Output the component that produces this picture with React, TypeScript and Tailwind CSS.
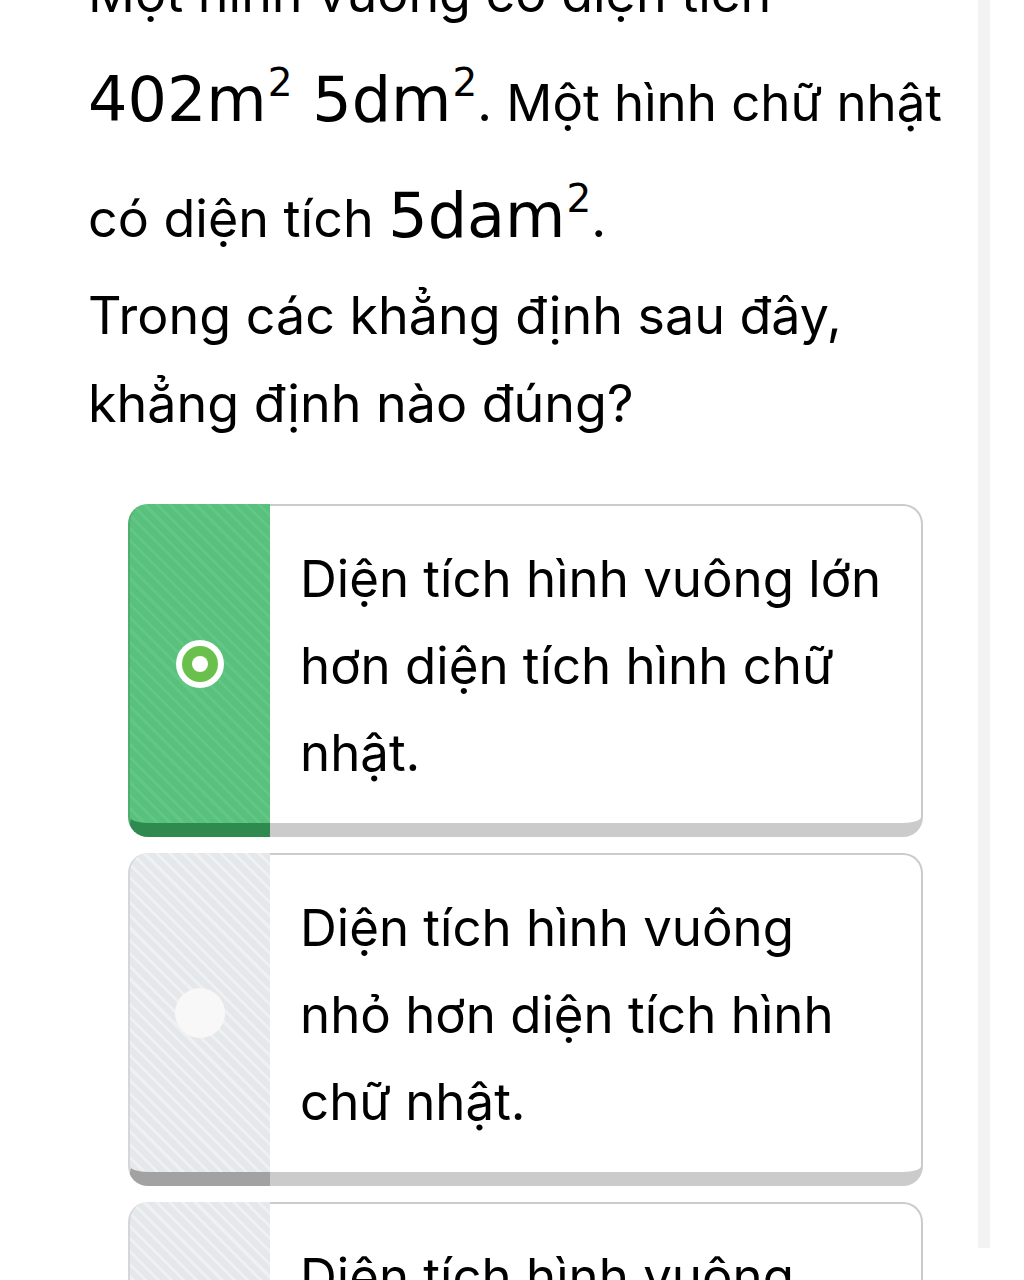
import React from "react";

const body = { fontFamily: "Inter, 'Noto Sans', sans-serif" };
const math = { fontFamily: "'DejaVu Sans', 'Liberation Sans', sans-serif" };

function Sup({ children }: { children: React.ReactNode }) {
  return (
    <span className="relative -top-[25px] ml-[1px] text-[39px] leading-none">{children}</span>
  );
}

function Option({
  lines,
  selected,
}: {
  lines: string[];
  selected?: boolean;
}) {
  return (
    <div className="flex">
      <div
        className={
          selected
            ? "flex w-[142px] shrink-0 items-center justify-center rounded-l-[20px] border-b-[14px] border-l-2 border-[#2f8a50] border-l-[#4eae6e] bg-[#58c27d] bg-[repeating-linear-gradient(45deg,rgba(255,255,255,0.07)_0px,rgba(255,255,255,0.07)_3px,transparent_3px,transparent_9px)]"
            : "flex w-[142px] shrink-0 items-center justify-center rounded-l-[20px] border-b-[14px] border-l-2 border-[#a2a2a2] border-l-[#d4d6d8] bg-[#e5e8ea] bg-[repeating-linear-gradient(45deg,rgba(255,255,255,0.35)_0px,rgba(255,255,255,0.35)_3px,transparent_3px,transparent_9px)]"
        }
      >
        {selected ? (
          <div className="flex h-[48px] w-[48px] items-center justify-center rounded-full bg-white">
            <div className="flex h-[36px] w-[36px] items-center justify-center rounded-full bg-[#6ac04c]">
              <div className="h-[16px] w-[16px] rounded-full bg-white" />
            </div>
          </div>
        ) : (
          <div className="h-[50px] w-[50px] rounded-full bg-[#f8f8f8]" />
        )}
      </div>
      <div className="flex-1 rounded-r-[20px] border-t-2 border-r-2 border-b-[14px] border-[#cbcbcb] bg-white pl-[30px] pr-4 pt-[29px] pb-[27px]">
        {lines.map((l, i) => (
          <div
            key={i}
            className="h-[87px] whitespace-nowrap text-[51px] leading-[87px] text-black"
            style={body}
          >
            {l}
          </div>
        ))}
      </div>
    </div>
  );
}

export default function App() {
  return (
    <div className="relative h-[1280px] w-[1024px] overflow-hidden bg-white" style={body}>
      <div className="absolute left-[978px] top-0 h-[1248px] w-[12px] bg-[#f3f3f3]" />
      <div className="-mt-[56px] pl-[88px] text-[52px] text-black">
        <div className="h-[109px] whitespace-nowrap leading-[100px]">Một hình vuông có diện tích</div>
        <div className="h-[116px] whitespace-nowrap leading-[100px]">
          <span className="text-[62px] leading-none" style={math}>
            402m<Sup>2</Sup> 5dm<Sup>2</Sup>
          </span>
          <span className="text-[51px]">. Một hình chữ nhật</span>
        </div>
        <div className="h-[97px] whitespace-nowrap leading-[100px]">
          có diện tích{" "}
          <span className="text-[62px] leading-none" style={math}>
            5dam<Sup>2</Sup>
          </span>
          .
        </div>
        <div className="h-[88px] whitespace-nowrap leading-[100px]">Trong các khẳng định sau đây,</div>
        <div className="h-[100px] whitespace-nowrap leading-[100px]">khẳng định nào đúng?</div>
      </div>
      <div className="ml-[128px] mt-[50px] flex w-[795px] flex-col gap-[16px]">
        <Option selected lines={["Diện tích hình vuông lớn", "hơn diện tích hình chữ", "nhật."]} />
        <Option lines={["Diện tích hình vuông", "nhỏ hơn diện tích hình", "chữ nhật."]} />
        <Option lines={["Diện tích hình vuông", "bằng diện tích hình chữ", "nhật."]} />
      </div>
    </div>
  );
}
